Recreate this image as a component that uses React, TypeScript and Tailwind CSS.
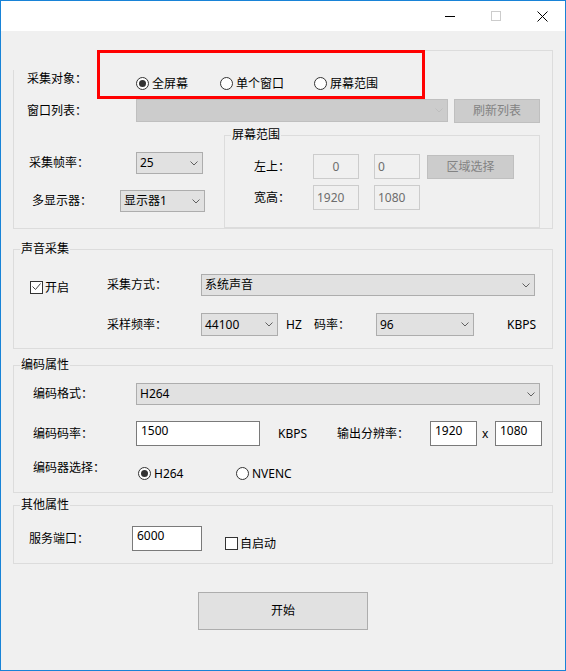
import React from 'react';

type BoxProps = { className?: string; text?: string; disabled?: boolean };

const Chevron = ({ color }: { color: string }) => (
  <svg width="8" height="5" viewBox="0 0 8 5" className="shrink-0 mr-[4px]">
    <path d="M0.5 0.5 L4 4 L7.5 0.5" fill="none" stroke={color} strokeWidth="1" />
  </svg>
);

function Combo({ className = '', text = '', disabled = false }: BoxProps) {
  return (
    <div
      className={`${className} flex items-center border ${
        disabled ? 'border-[#bfbfbf] bg-[#cccccc]' : 'border-[#adadad] bg-[#e1e1e1]'
      }`}
    >
      <span className="flex-1 pl-[3px] whitespace-nowrap">{text}</span>
      <Chevron color={disabled ? '#bfbfbf' : '#606060'} />
    </div>
  );
}

function Field({ className = '', text = '', disabled = false, center = false }: BoxProps & { center?: boolean }) {
  const look = disabled
    ? 'border-[#cccccc] bg-[#f0f0f0] text-[#6d6d6d] items-center'
    : 'border-[#7a7a7a] bg-white items-start pt-[1px]';
  const align = center ? 'justify-center' : disabled ? 'pl-[3px]' : 'pl-[4px]';
  return (
    <div className={`${className} flex border ${look} ${align}`}>
      <span className="leading-[16px]">{text}</span>
    </div>
  );
}

function Btn({ className = '', text = '', disabled = false }: BoxProps) {
  return (
    <div
      className={`${className} flex items-center justify-center border ${
        disabled ? 'border-[#bfbfbf] bg-[#cccccc] text-[#838383]' : 'border-[#adadad] bg-[#e1e1e1]'
      }`}
    >
      {text}
    </div>
  );
}

function Radio({ label, checked = false, className = '' }: { label: string; checked?: boolean; className?: string }) {
  return (
    <div className={`flex items-center h-[13px] ${className}`}>
      <span className="w-[13px] h-[13px] shrink-0 rounded-full border border-[#333333] bg-white flex items-center justify-center">
        {checked && <span className="w-[7px] h-[7px] rounded-full bg-[#333333]" />}
      </span>
      <span className="ml-[3px] leading-[13px] whitespace-nowrap">{label}</span>
    </div>
  );
}

function Check({ label, checked = false, className = '' }: { label: string; checked?: boolean; className?: string }) {
  return (
    <div className={`flex items-center h-[13px] ${className}`}>
      <span className="w-[13px] h-[13px] shrink-0 border border-[#333333] bg-white flex items-center justify-center">
        {checked && (
          <svg width="11" height="11" viewBox="0 0 11 11">
            <path d="M1.5 4.5 L4.5 7.5 L9.5 1.5" fill="none" stroke="#444444" strokeWidth="1" />
          </svg>
        )}
      </span>
      <span className="ml-[2px] leading-[13px] whitespace-nowrap">{label}</span>
    </div>
  );
}

function Group({ className = '', title, children }: { className?: string; title?: string; children: React.ReactNode }) {
  return (
    <div className={`relative border border-[#dcdcdc] ${className}`}>
      {title && (
        <span className="absolute -top-[9px] left-[6px] px-[1px] bg-[#f0f0f0] leading-[16px] whitespace-nowrap">
          {title}
        </span>
      )}
      {children}
    </div>
  );
}

const TitleBar = () => (
  <div className="h-[30px] bg-white flex justify-end shrink-0">
    <div className="w-[46px] h-[30px] flex items-center justify-center">
      <svg width="10" height="10" viewBox="0 0 10 10">
        <path d="M0 5.5 H10" stroke="#000" strokeWidth="1" />
      </svg>
    </div>
    <div className="w-[46px] h-[30px] flex items-center justify-center">
      <svg width="10" height="10" viewBox="0 0 10 10">
        <rect x="0.5" y="0.5" width="9" height="9" fill="none" stroke="#cccccc" strokeWidth="1" />
      </svg>
    </div>
    <div className="w-[46px] h-[30px] flex items-center justify-center">
      <svg width="11" height="11" viewBox="0 0 11 11">
        <path d="M0.5 0.5 L10.5 10.5 M10.5 0.5 L0.5 10.5" stroke="#000" strokeWidth="1" />
      </svg>
    </div>
  </div>
);

export default function App() {
  return (
    <div className="w-[566px] h-[671px] border border-[#1883d7] bg-[#f0f0f0] flex flex-col text-[12px] leading-[16px] text-black font-['Noto_Sans','Noto_Sans_CJK_SC',sans-serif]">
      <TitleBar />

      <div className="flex flex-col pl-[12px]">
        {/* 采集对象 */}
        <Group className="mt-[19px] w-[540px] h-[179px]">
          <div className="absolute -left-[1px] -top-[1px] w-[84px] h-[20px] bg-[#f0f0f0]" />
          <div className="flex flex-col">
            <div className="mt-[20px] flex items-start h-[16px] pl-[13px]">
              <span className="w-[109px]">采集对象：</span>
              <div className="mt-[6px] flex">
                <Radio className="w-[84px]" checked label="全屏幕" />
                <Radio className="w-[94px]" label="单个窗口" />
                <Radio label="屏幕范围" />
              </div>
            </div>

            <div className="mt-[12px] flex items-start h-[24px] pl-[13px]">
              <span className="w-[109px] leading-[24px]">窗口列表：</span>
              <Combo className="w-[312px] h-[23px]" disabled />
              <Btn className="ml-[6px] w-[86px] h-[24px]" text="刷新列表" disabled />
            </div>

            <div className="mt-[12px] flex">
              <div className="w-[210px] flex flex-col">
                <div className="mt-[17px] flex items-center h-[22px] pl-[15px]">
                  <span className="w-[107px]">采集帧率：</span>
                  <Combo className="w-[67px] h-[22px]" text="25" />
                </div>
                <div className="mt-[16px] flex items-center h-[22px] pl-[18px]">
                  <span className="w-[88px]">多显示器：</span>
                  <Combo className="w-[85px] h-[22px]" text="显示器1" />
                </div>
              </div>

              <Group className="w-[316px] h-[93px]" title="屏幕范围">
                <div className="mt-[18px] flex items-center h-[25px] pl-[29px]">
                  <span className="w-[59px]">左上：</span>
                  <Field className="w-[46px] h-[25px]" text="0" disabled center />
                  <Field className="ml-[15px] w-[46px] h-[25px]" text="0" disabled />
                  <Btn className="ml-[7px] w-[87px] h-[24px]" text="区域选择" disabled />
                </div>
                <div className="mt-[6px] flex items-center h-[25px] pl-[29px]">
                  <span className="w-[59px]">宽高：</span>
                  <Field className="w-[46px] h-[25px]" text="1920" disabled />
                  <Field className="ml-[15px] w-[46px] h-[25px]" text="1080" disabled />
                </div>
              </Group>
            </div>
          </div>
          <div className="absolute left-[83px] -top-[1px] w-[328px] h-[49px] border-[3px] border-[#ff0000]" />
        </Group>

        {/* 声音采集 */}
        <Group className="mt-[20px] w-[540px] h-[100px]" title="声音采集">
          <div className="flex">
            <div className="w-[93px] pl-[16px] pt-[31px]">
              <Check checked label="开启" />
            </div>
            <div className="flex flex-col pt-[24px]">
              <div className="flex items-center h-[22px]">
                <span className="w-[94px]">采集方式：</span>
                <Combo className="w-[334px] h-[22px]" text="系统声音" />
              </div>
              <div className="mt-[17px] flex items-center h-[23px]">
                <span className="w-[94px]">采样频率：</span>
                <Combo className="w-[77px] h-[23px]" text="44100" />
                <span className="ml-[8px] w-[28px]">HZ</span>
                <span className="w-[62px]">码率：</span>
                <Combo className="w-[98px] h-[23px]" text="96" />
                <span className="ml-[33px]">KBPS</span>
              </div>
            </div>
          </div>
        </Group>

        {/* 编码属性 */}
        <Group className="mt-[16px] w-[540px] h-[128px]" title="编码属性">
          <div className="flex flex-col pl-[19px]">
            <div className="mt-[17px] flex items-center h-[22px]">
              <span className="w-[103px]">编码格式：</span>
              <Combo className="w-[404px] h-[22px]" text="H264" />
            </div>
            <div className="mt-[16px] flex items-start h-[25px]">
              <span className="w-[103px] leading-[25px]">编码码率：</span>
              <Field className="w-[124px] h-[25px]" text="1500" />
              <span className="ml-[18px] w-[59px] leading-[25px]">KBPS</span>
              <span className="w-[93px] leading-[25px]">输出分辨率：</span>
              <Field className="w-[47px] h-[25px]" text="1920" />
              <span className="ml-[5px] w-[13px] leading-[25px]">x</span>
              <Field className="w-[47px] h-[25px]" text="1080" />
            </div>
            <div className="mt-[14px] flex items-start h-[16px]">
              <span className="w-[105px]">编码器选择：</span>
              <div className="mt-[7px] flex">
                <Radio className="w-[98px]" checked label="H264" />
                <Radio label="NVENC" />
              </div>
            </div>
          </div>
        </Group>

        {/* 其他属性 */}
        <Group className="mt-[12px] w-[540px] h-[59px]" title="其他属性">
          <div className="mt-[20px] flex items-start h-[25px] pl-[15px]">
            <span className="w-[103px] leading-[25px]">服务端口：</span>
            <Field className="w-[70px] h-[25px]" text="6000" />
            <Check className="ml-[23px] mt-[11px]" label="自启动" />
          </div>
        </Group>

        <Btn className="mt-[28px] ml-[185px] w-[170px] h-[38px]" text="开始" />
      </div>
    </div>
  );
}
